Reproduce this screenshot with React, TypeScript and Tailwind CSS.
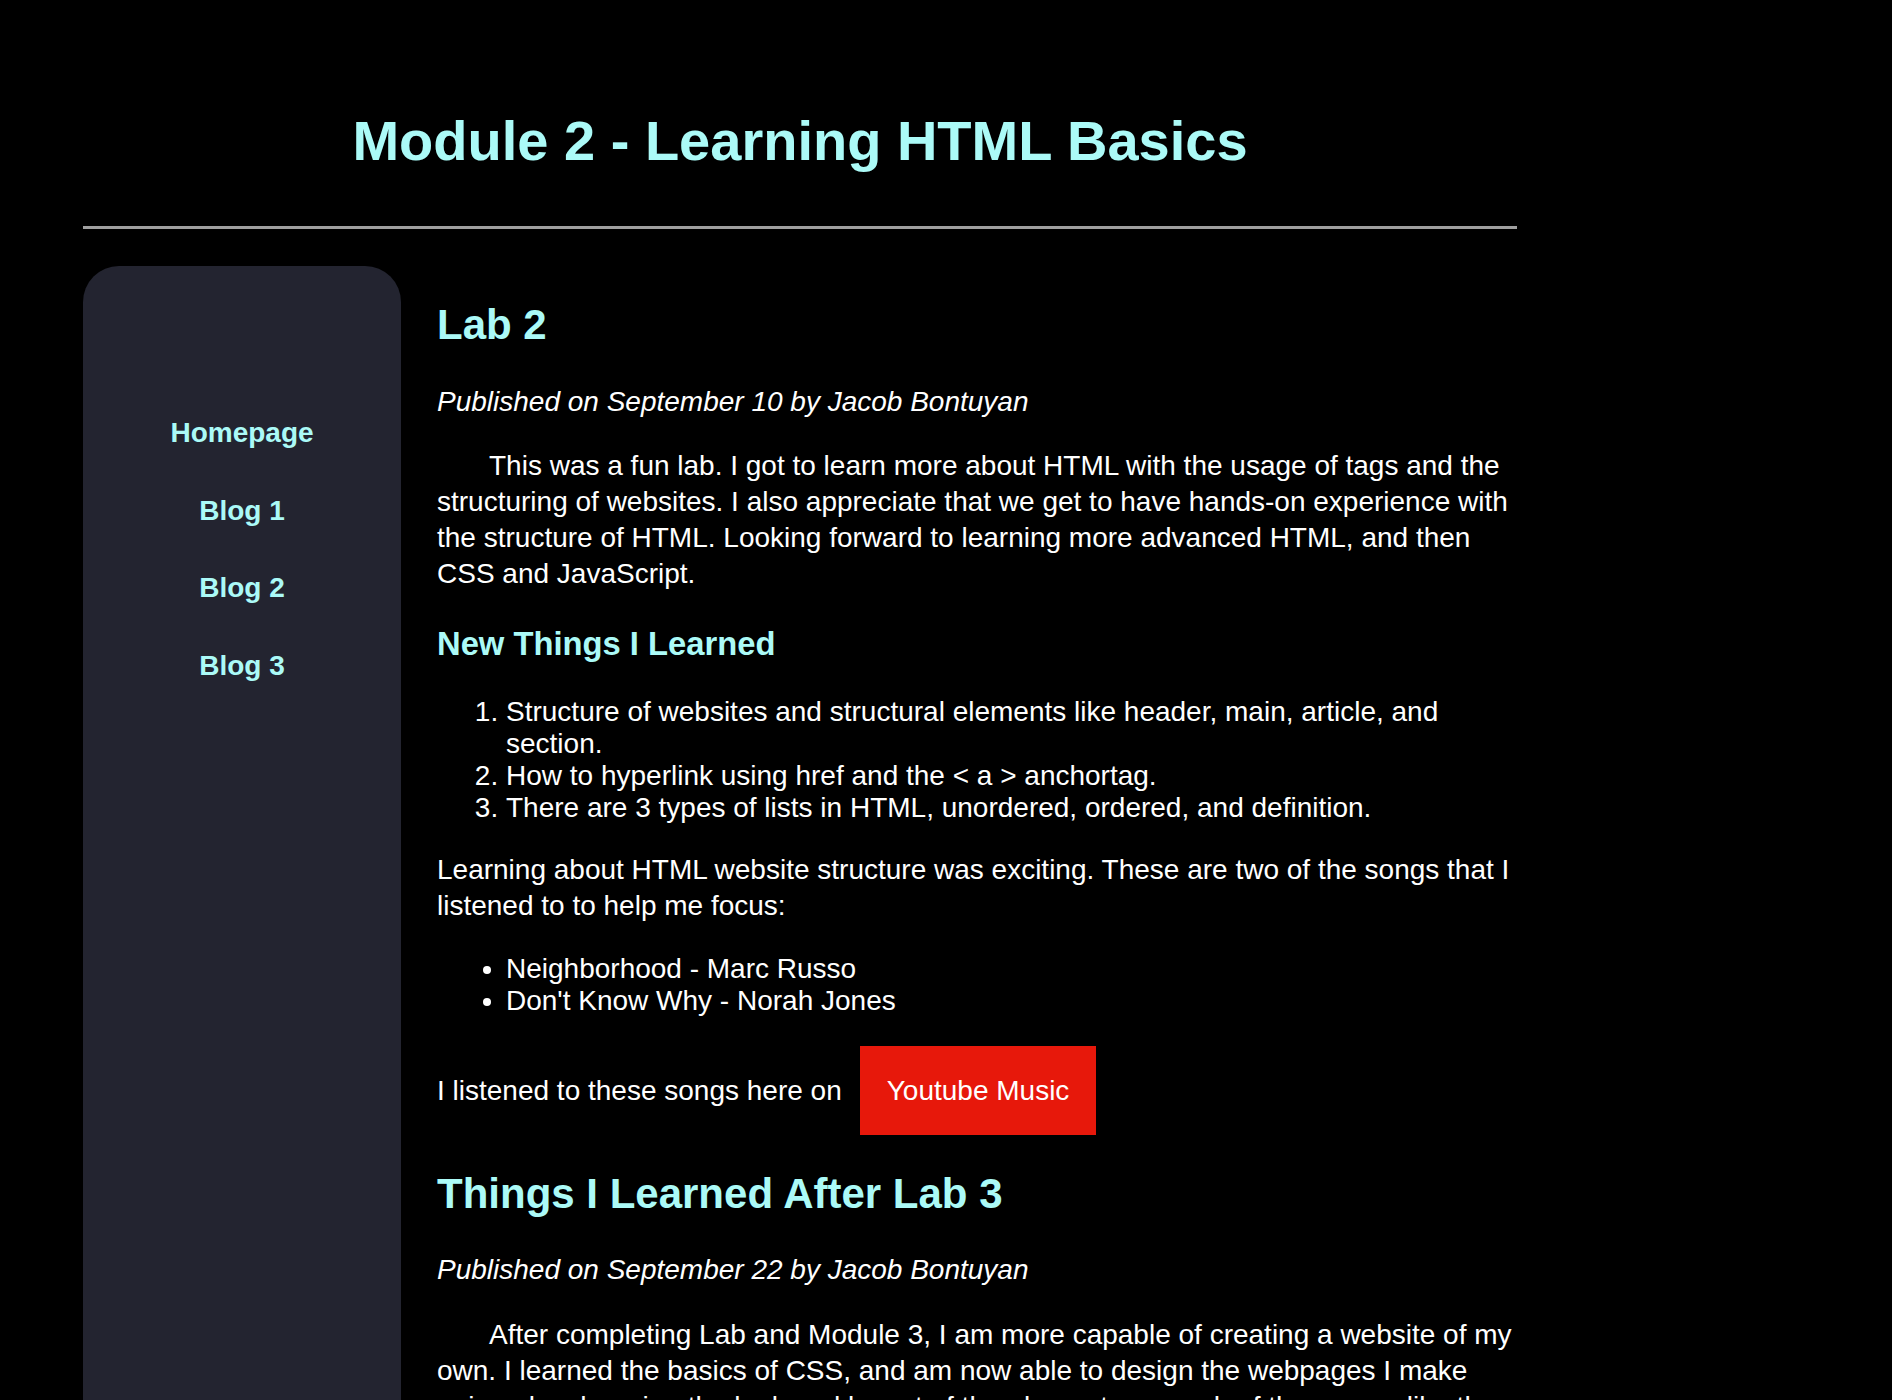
import React from "react";

const navLinks = ["Homepage", "Blog 1", "Blog 2", "Blog 3"];

const learned = [
  "Structure of websites and structural elements like header, main, article, and section.",
  "How to hyperlink using href and the < a > anchortag.",
  "There are 3 types of lists in HTML, unordered, ordered, and definition.",
];

const songs = ["Neighborhood - Marc Russo", "Don't Know Why - Norah Jones"];

export default function App() {
  return (
    <div className="min-h-screen bg-black font-['Liberation_Sans',Arial,sans-serif] text-white">
      <div className="w-[1434px] ml-[83px] pb-[80px]">
        {/* Header */}
        <header className="pt-[109px]">
          <h1 className="text-center text-[56px] leading-[64px] font-bold text-[#abfaf7]">
            Module 2 - Learning HTML Basics
          </h1>
          <div className="mt-[53px] h-[3px] bg-[#9f9f9f]" />
        </header>

        <div className="mt-[37px] flex gap-[36px]">
          {/* Sidebar */}
          <aside className="w-[318px] shrink-0 rounded-[36px] bg-[#232430] pt-[151px]">
            <nav className="flex flex-col gap-[45.5px] text-center">
              {navLinks.map((name) => (
                <a
                  key={name}
                  href="#"
                  className="text-[28px] leading-[32px] font-bold text-[#abfaf7]"
                >
                  {name}
                </a>
              ))}
            </nav>
          </aside>

          {/* Main content */}
          <main className="w-[1080px] text-[28px]">
            <article>
              <h2 className="mt-[35px] text-[42px] leading-[48px] font-bold text-[#abfaf7]">
                Lab 2
              </h2>
              <p className="mt-[35px] leading-[36px] italic">
                Published on September 10 by Jacob Bontuyan
              </p>
              <p className="mt-[28px] leading-[36px] indent-[52px]">
                This was a fun lab. I got to learn more about HTML with the usage of tags and the
                structuring of websites. I also appreciate that we get to have hands-on experience
                with the structure of HTML. Looking forward to learning more advanced HTML, and then
                CSS and JavaScript.
              </p>

              <h3 className="mt-[33px] text-[32.76px] leading-[38px] font-bold text-[#abfaf7]">
                New Things I Learned
              </h3>
              <ol className="mt-[33px] list-decimal pl-[69px] leading-[32px]">
                {learned.map((item) => (
                  <li key={item}>{item}</li>
                ))}
              </ol>

              <p className="mt-[28px] leading-[36px]">
                Learning about HTML website structure was exciting. These are two of the songs that
                I listened to to help me focus:
              </p>
              <ul className="mt-[29px] list-disc pl-[69px] leading-[32px]">
                {songs.map((song) => (
                  <li key={song}>{song}</li>
                ))}
              </ul>

              <div className="mt-[29px] flex items-center gap-[18px]">
                <span className="leading-[32px]">I listened to these songs here on</span>
                <a href="#" className="bg-[#e7180b] px-[27px] py-[28px] leading-[33px] text-white">
                  Youtube Music
                </a>
              </div>
            </article>

            <article>
              <h2 className="mt-[35px] text-[42px] leading-[48px] font-bold text-[#abfaf7]">
                Things I Learned After Lab 3
              </h2>
              <p className="mt-[34px] leading-[36px] italic">
                Published on September 22 by Jacob Bontuyan
              </p>
              <p className="mt-[29px] leading-[36px] indent-[52px]">
                After completing Lab and Module 3, I am more capable of creating a website of my
                own. I learned the basics of CSS, and am now able to design the webpages I make
                unique by changing the look and layout of the elements on each of the pages, like
                the colors, fonts, borders and spacing.
              </p>
            </article>
          </main>
        </div>
      </div>
    </div>
  );
}
